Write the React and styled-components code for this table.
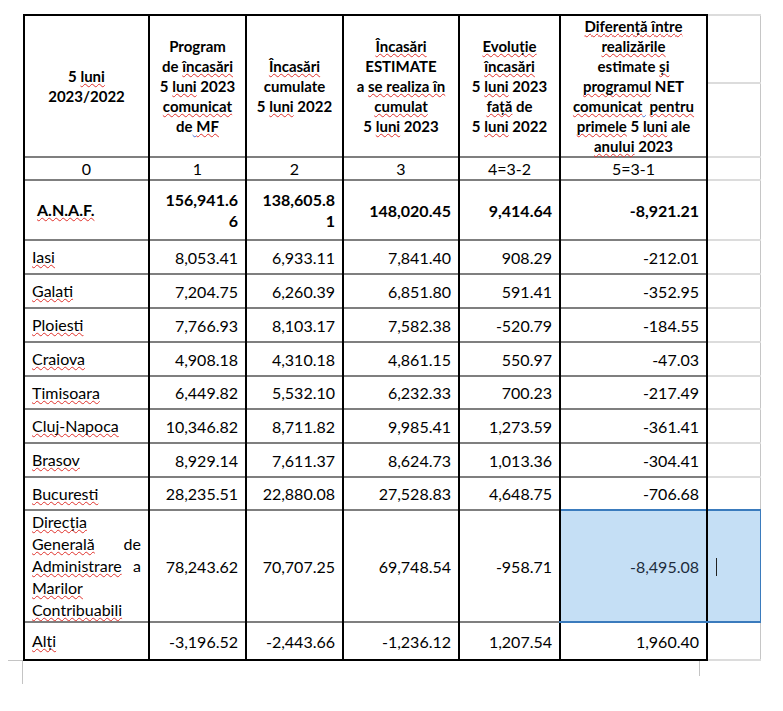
import React from 'react';
import styled, { createGlobalStyle } from 'styled-components';

const GlobalStyle = createGlobalStyle`
  html, body {
    margin: 0;
    padding: 0;
    background: #fff;
  }
  body {
    font-family: Lato, "Open Sans", "Liberation Sans", sans-serif;
    color: #000;
  }
`;

const Page = styled.div`
  width: 783px;
  height: 711px;
  box-sizing: border-box;
  padding: 14px 0 0 23px;
`;

const Frame = styled.div`
  position: relative;
  display: inline-block;

  &::before {
    content: '';
    position: absolute;
    left: -15px;
    bottom: 0;
    width: 15px;
    height: 1px;
    background: #c4c4c4;
  }
  &::after {
    content: '';
    position: absolute;
    left: -1px;
    top: 100%;
    width: 1px;
    height: 23px;
    background: #c4c4c4;
  }
`;

const Mark = styled.span`
  position: absolute;
  left: ${p => p.$x}px;
  top: 100%;
  width: 1px;
  height: ${p => p.$h}px;
  background: #c4c4c4;
`;

const Grid = styled.table`
  border-collapse: collapse;
  table-layout: fixed;
  width: 736px;
`;

const Row = styled.tr`
  height: ${p => p.$h}px;
`;

const HeadCell = styled.th`
  padding: 0 2px;
  border-top: 2px solid #000;
  border-left: 2px solid #000;
  font-size: 15px;
  line-height: 20px;
  font-weight: 700;
  text-align: center;
  vertical-align: middle;
`;

const Line = styled.span`
  display: block;
  white-space: nowrap;
`;

const Cell = styled.td`
  padding: 0 7px;
  border-top: 2px solid #7f7f7f;
  border-left: 2px solid #000;
  border-bottom: ${p => (p.$end ? '2px solid #000' : 'none')};
  font-size: 16px;
  line-height: 21px;
  font-weight: ${p => (p.$bold ? 700 : 400)};
  text-align: ${p => p.$align || 'right'};
  vertical-align: middle;
  white-space: nowrap;
  background: ${p => (p.$selected ? '#c5dff5' : 'transparent')};
  color: ${p => (p.$selected ? '#1d2c3c' : '#000')};
  ${p => p.$selected && 'border-top: 2px solid #3a7bbd; border-bottom: 2px solid #3a7bbd;'}
`;

const Label = styled(Cell)`
  text-align: left;
  padding-left: ${p => (p.$indent ? 12 : 7)}px;
  line-height: 22px;
`;

const Justified = styled.span`
  display: block;
  white-space: nowrap;
  text-align: justify;
  text-align-last: justify;
`;

const Ghost = styled.td`
  padding: 0 0 0 8px;
  border-top: ${p => (p.$selected ? '2px solid #3a7bbd' : '2px solid #dcdcdc')};
  border-left: 2px solid #000;
  border-right: ${p => (p.$selected ? '1px solid #3a7bbd' : '1px solid #c6c6c6')};
  border-bottom: ${p => (p.$selected ? '2px solid #3a7bbd' : p.$end ? '2px solid #dcdcdc' : 'none')};
  background: ${p => (p.$selected ? '#c5dff5' : 'transparent')};
  vertical-align: middle;
`;

const Caret = styled.span`
  display: inline-block;
  width: 1px;
  height: 18px;
  background: #222;
  vertical-align: middle;
`;

const Sq = styled.span`
  text-decoration: underline wavy #e0312b;
  text-decoration-thickness: 1px;
  text-underline-offset: 1px;
  text-decoration-skip-ink: none;
`;

const Gr = styled.span`
  white-space: pre;
  text-decoration: underline wavy #3f6fd8;
  text-decoration-thickness: 1px;
  text-underline-offset: 1px;
  text-decoration-skip-ink: none;
`;

const cities = [
  ['Iasi', '8,053.41', '6,933.11', '7,841.40', '908.29', '-212.01', 34],
  ['Galati', '7,204.75', '6,260.39', '6,851.80', '591.41', '-352.95', 34],
  ['Ploiesti', '7,766.93', '8,103.17', '7,582.38', '-520.79', '-184.55', 34],
  ['Craiova', '4,908.18', '4,310.18', '4,861.15', '550.97', '-47.03', 34],
  ['Timisoara', '6,449.82', '5,532.10', '6,232.33', '700.23', '-217.49', 33],
  ['Cluj-Napoca', '10,346.82', '8,711.82', '9,985.41', '1,273.59', '-361.41', 34],
  ['Brasov', '8,929.14', '7,611.37', '8,624.73', '1,013.36', '-304.41', 34],
  ['Bucuresti', '28,235.51', '22,880.08', '27,528.83', '4,648.75', '-706.68', 33],
];

export default function App() {
  return (
    <Page>
      <GlobalStyle />
      <Frame>
        <Grid>
          <colgroup>
            <col style={{ width: 125 }} />
            <col style={{ width: 97 }} />
            <col style={{ width: 97 }} />
            <col style={{ width: 116 }} />
            <col style={{ width: 101 }} />
            <col style={{ width: 147 }} />
            <col style={{ width: 53 }} />
          </colgroup>
          <thead>
            <Row $h={68}>
              <HeadCell rowSpan={2}>
                <Line>5 <Sq>luni</Sq></Line>
                <Line>2023/2022</Line>
              </HeadCell>
              <HeadCell rowSpan={2}>
                <Line>Program</Line>
                <Line>de <Sq>încasări</Sq></Line>
                <Line>5 <Sq>luni</Sq> 2023</Line>
                <Line><Sq>comunicat</Sq></Line>
                <Line>de<Gr> </Gr><Sq>MF</Sq></Line>
              </HeadCell>
              <HeadCell rowSpan={2}>
                <Line><Sq>Încasări</Sq></Line>
                <Line>cumulate</Line>
                <Line>5 <Sq>luni</Sq> 2022</Line>
              </HeadCell>
              <HeadCell rowSpan={2}>
                <Line><Sq>Încasări</Sq></Line>
                <Line>ESTIMATE</Line>
                <Line>a <Sq>se realiza în</Sq></Line>
                <Line><Sq>cumulat</Sq></Line>
                <Line>5 <Sq>luni</Sq> 2023</Line>
              </HeadCell>
              <HeadCell rowSpan={2}>
                <Line><Sq>Evoluție</Sq></Line>
                <Line><Sq>încasări</Sq></Line>
                <Line>5 <Sq>luni</Sq> 2023</Line>
                <Line><Sq>față</Sq> de</Line>
                <Line>5 <Sq>luni</Sq> 2022</Line>
              </HeadCell>
              <HeadCell rowSpan={2}>
                <Line><Sq>Diferență între</Sq></Line>
                <Line><Sq>realizările</Sq></Line>
                <Line>estimate <Sq>și</Sq></Line>
                <Line><Sq>programul</Sq> NET</Line>
                <Line><Sq>comunicat</Sq><Gr> </Gr> <Sq>pentru</Sq></Line>
                <Line><Sq>primele</Sq> 5 <Sq>luni</Sq> ale</Line>
                <Line><Sq>anului</Sq> 2023</Line>
              </HeadCell>
              <Ghost />
            </Row>
            <Row $h={74}>
              <Ghost />
            </Row>
          </thead>
          <tbody>
            <Row $h={23}>
              <Cell $align="center">0</Cell>
              <Cell $align="center">1</Cell>
              <Cell $align="center">2</Cell>
              <Cell $align="center">3</Cell>
              <Cell $align="center">4=3-2</Cell>
              <Cell $align="center">5=3-1</Cell>
              <Ghost />
            </Row>
            <Row $h={60}>
              <Label $bold $indent><Sq>A.N.A.F.</Sq></Label>
              <Cell $bold>156,941.6<br />6</Cell>
              <Cell $bold>138,605.8<br />1</Cell>
              <Cell $bold>148,020.45</Cell>
              <Cell $bold>9,414.64</Cell>
              <Cell $bold>-8,921.21</Cell>
              <Ghost />
            </Row>
            {cities.map(([name, a, b, c, d, e, h]) => (
              <Row key={name} $h={h}>
                <Label><Sq>{name}</Sq></Label>
                <Cell>{a}</Cell>
                <Cell>{b}</Cell>
                <Cell>{c}</Cell>
                <Cell>{d}</Cell>
                <Cell>{e}</Cell>
                <Ghost />
              </Row>
            ))}
            <Row $h={111}>
              <Label>
                <Line><Sq>Direcția</Sq></Line>
                <Justified><Sq>Generală</Sq> de</Justified>
                <Justified><Sq>Administrare</Sq> a</Justified>
                <Line><Sq>Marilor</Sq></Line>
                <Line><Sq>Contribuabili</Sq></Line>
              </Label>
              <Cell>78,243.62</Cell>
              <Cell>70,707.25</Cell>
              <Cell>69,748.54</Cell>
              <Cell>-958.71</Cell>
              <Cell $selected>-8,495.08</Cell>
              <Ghost $selected><Caret /></Ghost>
            </Row>
            <Row $h={38}>
              <Label $end><Sq>Alți</Sq></Label>
              <Cell $end>-3,196.52</Cell>
              <Cell $end>-2,443.66</Cell>
              <Cell $end>-1,236.12</Cell>
              <Cell $end>1,207.54</Cell>
              <Cell $end>1,960.40</Cell>
              <Ghost $end />
            </Row>
          </tbody>
        </Grid>
        <Mark $x={676} $h={15} />
      </Frame>
    </Page>
  );
}
